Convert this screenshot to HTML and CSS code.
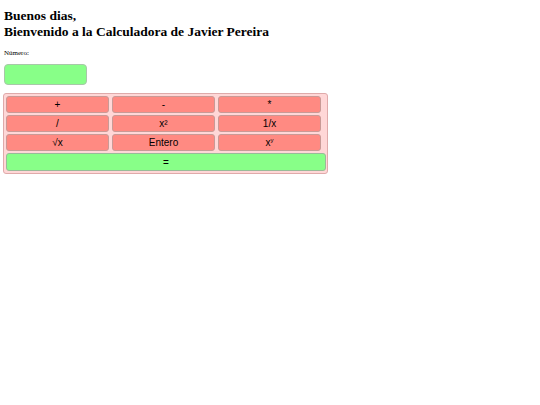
FILE: index.html
```html
<!DOCTYPE html>
<html>
<head>
<meta charset="utf-8">
<link rel="stylesheet" href="styles.css">
</head>
<body>
<h1 class="title">Buenos dias,<br>Bienvenido a la Calculadora de Javier Pereira</h1>
<p class="label">Número:</p>
<input class="num" type="text">
<div class="calc">
  <button class="btn">+</button>
  <button class="btn">-</button>
  <button class="btn">*</button>
  <button class="btn">/</button>
  <button class="btn">x²</button>
  <button class="btn">1/x</button>
  <button class="btn">√x</button>
  <button class="btn">Entero</button>
  <button class="btn">x<sup class="sup">y</sup></button>
  <button class="eq">=</button>
</div>
</body>
</html>
```
FILE: styles.css
```css
body {
  margin: 0;
  padding: 0 4px;
  font-family: "Liberation Serif", serif;
  background: #fff;
}
.title {
  margin: 8px 0 0 0;
  font-size: 13.5px;
  line-height: 16px;
  font-weight: bold;
  color: #000;
}
.label {
  margin: 9px 0 0 0;
  font-size: 7px;
  line-height: 9px;
  color: #000;
}
.num {
  display: block;
  margin: 6px 0 0 0;
  width: 83px;
  height: 21px;
  box-sizing: border-box;
  background: #88ff88;
  border: 1px solid #a8c8a8;
  border-radius: 4px;
  padding: 0;
}
.calc {
  margin: 8px 0 0 -1px;
  width: 325px;
  box-sizing: border-box;
  background: #ffd7d7;
  border: 1px solid #dfaaaa;
  border-radius: 3px;
  padding: 2px 1px 2px 2px;
  display: grid;
  grid-template-columns: 106px 106px 106px;
  row-gap: 2px;
}
.btn, .eq {
  font-family: "Liberation Sans", Arial, sans-serif;
  font-size: 10px;
  color: #000;
  height: 17px;
  padding: 0;
  border-radius: 3px;
  box-sizing: border-box;
}
.btn {
  width: 103px;
  background: #ff8a82;
  border: 1px solid #c99a96;
}
.eq {
  grid-column: 1 / 4;
  width: 320px;
  height: 18px;
  background: #88ff88;
  border: 1px solid #99bb99;
}
.sup {
  font-size: 6px;
  vertical-align: super;
  line-height: 0;
}
```
